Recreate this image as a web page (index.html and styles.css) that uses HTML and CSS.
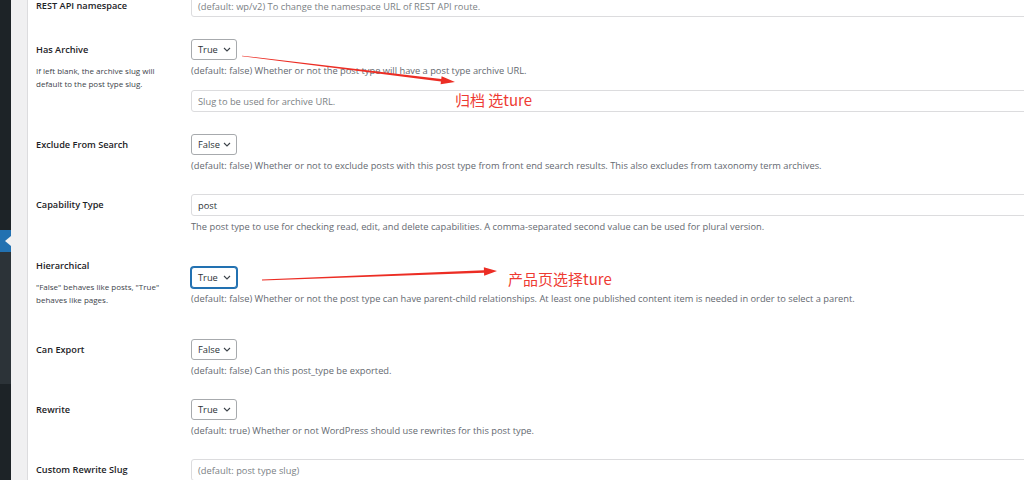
FILE: index.html
```html
<!DOCTYPE html>
<html lang="en">
<head>
<meta charset="utf-8">
<title>Post type settings</title>
<link rel="stylesheet" href="styles.css">
</head>
<body>
<div class="layout">
  <nav class="adminmenu">
    <div class="menu-top"></div>
    <div class="menu-current"><span class="notch"></span></div>
    <div class="submenu"></div>
    <div class="menu-rest"></div>
  </nav>
  <div class="gutter"></div>
  <main class="card">
    <div class="form-table">
      <div class="row">
        <div class="th"><span class="label">REST API namespace</span></div>
        <div class="td"><div class="text-input placeholder">(default: wp/v2) To change the namespace URL of REST API route.</div></div>
      </div>
      <div class="row">
        <div class="th">
          <span class="label">Has Archive</span>
          <p class="note">If left blank, the archive slug will<br>default to the post type slug.</p>
        </div>
        <div class="td">
          <div class="select"><span>True</span><svg class="chev" width="8" height="5" viewBox="0 0 8 5"><path d="M1 1 L4 4 L7 1"/></svg></div>
          <p class="desc">(default: false) Whether or not the post type will have a post type archive URL.</p>
          <div class="text-input placeholder slug">Slug to be used for archive URL.</div>
        </div>
      </div>
      <div class="row">
        <div class="th"><span class="label">Exclude From Search</span></div>
        <div class="td">
          <div class="select"><span>False</span><svg class="chev" width="8" height="5" viewBox="0 0 8 5"><path d="M1 1 L4 4 L7 1"/></svg></div>
          <p class="desc">(default: false) Whether or not to exclude posts with this post type from front end search results. This also excludes from taxonomy term archives.</p>
        </div>
      </div>
      <div class="row">
        <div class="th"><span class="label">Capability Type</span></div>
        <div class="td">
          <div class="text-input">post</div>
          <p class="desc">The post type to use for checking read, edit, and delete capabilities. A comma-separated second value can be used for plural version.</p>
        </div>
      </div>
      <div class="row">
        <div class="th">
          <span class="label">Hierarchical</span>
          <p class="note">"False" behaves like posts, "True"<br>behaves like pages.</p>
        </div>
        <div class="td">
          <div class="select focused"><span>True</span><svg class="chev" width="8" height="5" viewBox="0 0 8 5"><path d="M1 1 L4 4 L7 1"/></svg></div>
          <p class="desc">(default: false) Whether or not the post type can have parent-child relationships. At least one published content item is needed in order to select a parent.</p>
        </div>
      </div>
      <div class="row">
        <div class="th"><span class="label">Can Export</span></div>
        <div class="td">
          <div class="select"><span>False</span><svg class="chev" width="8" height="5" viewBox="0 0 8 5"><path d="M1 1 L4 4 L7 1"/></svg></div>
          <p class="desc">(default: false) Can this post_type be exported.</p>
        </div>
      </div>
      <div class="row">
        <div class="th"><span class="label">Rewrite</span></div>
        <div class="td">
          <div class="select"><span>True</span><svg class="chev" width="8" height="5" viewBox="0 0 8 5"><path d="M1 1 L4 4 L7 1"/></svg></div>
          <p class="desc">(default: true) Whether or not WordPress should use rewrites for this post type.</p>
        </div>
      </div>
      <div class="row">
        <div class="th"><span class="label">Custom Rewrite Slug</span></div>
        <div class="td"><div class="text-input placeholder">(default: post type slug)</div></div>
      </div>
    </div>
  </main>

  <svg class="arrows" width="1024" height="480" viewBox="0 0 1024 480">
    <polygon points="241.96,56.3 440.95,81.5 440.6,84.3 455,82 441.6,76.3 441.25,79.1 242.04,55.7"/>
    <polygon points="262.01,280.4 484.05,272.8 484.15,275.7 497,271 483.85,267.3 483.95,270.2 261.99,279.6"/>
  </svg>
  <div class="note-cn note-archive">归档 选ture</div>
  <div class="note-cn note-hier">产品页选择ture</div>
</div>
</body>
</html>
```

FILE: styles.css
```css
html, body {
  margin: 0;
  padding: 0;
  background: #ffffff;
}

.layout {
  position: relative;
  display: flex;
  width: 1024px;
  height: 480px;
  overflow: hidden;
  font-family: "Segoe UI", "Open Sans", "Noto Sans", sans-serif;
}

/* admin sidebar */
.adminmenu {
  width: 11px;
  flex: none;
  display: flex;
  flex-direction: column;
  background: #1d2327;
}
.menu-top { height: 230px; background: #1d2327; }
.menu-current {
  position: relative;
  height: 22px;
  background: #2271b1;
}
.notch {
  position: absolute;
  right: 0;
  top: 6px;
  width: 0;
  height: 0;
  border-top: 5px solid transparent;
  border-bottom: 5px solid transparent;
  border-right: 6px solid #f0f0f1;
}
.submenu { height: 132px; background: #2c3338; }
.menu-rest { flex: 1; background: #1d2327; }

.gutter {
  width: 16px;
  flex: none;
  background: #f0f0f1;
}

/* card */
.card {
  flex: 1;
  min-width: 0;
  background: #ffffff;
  border-left: 1px solid #dcdcde;
  padding-left: 8px;
  overflow: hidden;
}
.form-table {
  margin-top: -16px;
}
.row {
  display: grid;
  grid-template-columns: 155px 1fr;
}
.th {
  align-self: start;
  padding: 15px 0;
}
.label {
  display: block;
  font-size: 9.2px;
  line-height: 13px;
  font-weight: 600;
  color: #1d2327;
  white-space: nowrap;
}
.note {
  margin: 8px 0 7px;
  font-size: 8px;
  line-height: 13px;
  color: #3c434a;
  white-space: nowrap;
}
.td {
  align-self: center;
  padding: 11px 0;
  min-width: 0;
}
.select {
  box-sizing: border-box;
  width: 46px;
  height: 21px;
  border: 1px solid #a7aaad;
  border-radius: 3px;
  display: flex;
  align-items: center;
  justify-content: space-between;
  padding: 0 5px 0 6px;
  font-size: 9.3px;
  color: #2c3338;
  background: #ffffff;
}
.select.focused {
  border-color: #2271b1;
  box-shadow: 0 0 0 1px #2271b1;
}
.chev path {
  fill: none;
  stroke: #3c434a;
  stroke-width: 1.1;
}
.text-input {
  box-sizing: border-box;
  width: 880px;
  height: 22px;
  border: 1px solid #dcdcde;
  border-radius: 3px;
  display: flex;
  align-items: center;
  padding: 0 6px;
  font-size: 9.3px;
  color: #2c3338;
  white-space: nowrap;
}
.text-input.placeholder {
  color: #7b7f85;
}
.text-input.slug {
  margin-top: 13px;
}
.desc {
  margin: 4px 0 0;
  font-size: 9.3px;
  line-height: 13px;
  color: #646970;
  white-space: nowrap;
}

/* annotations */
.arrows {
  position: absolute;
  left: 0;
  top: 0;
  pointer-events: none;
}
.arrows polygon {
  fill: #ec2d24;
}
.note-cn {
  position: absolute;
  font-family: "Noto Sans CJK SC", "Noto Sans", sans-serif;
  font-size: 15px;
  line-height: 20px;
  color: #ee3b33;
  white-space: nowrap;
}
.note-archive { left: 455px; top: 90px; }
.note-hier { left: 508px; top: 269px; }
```
